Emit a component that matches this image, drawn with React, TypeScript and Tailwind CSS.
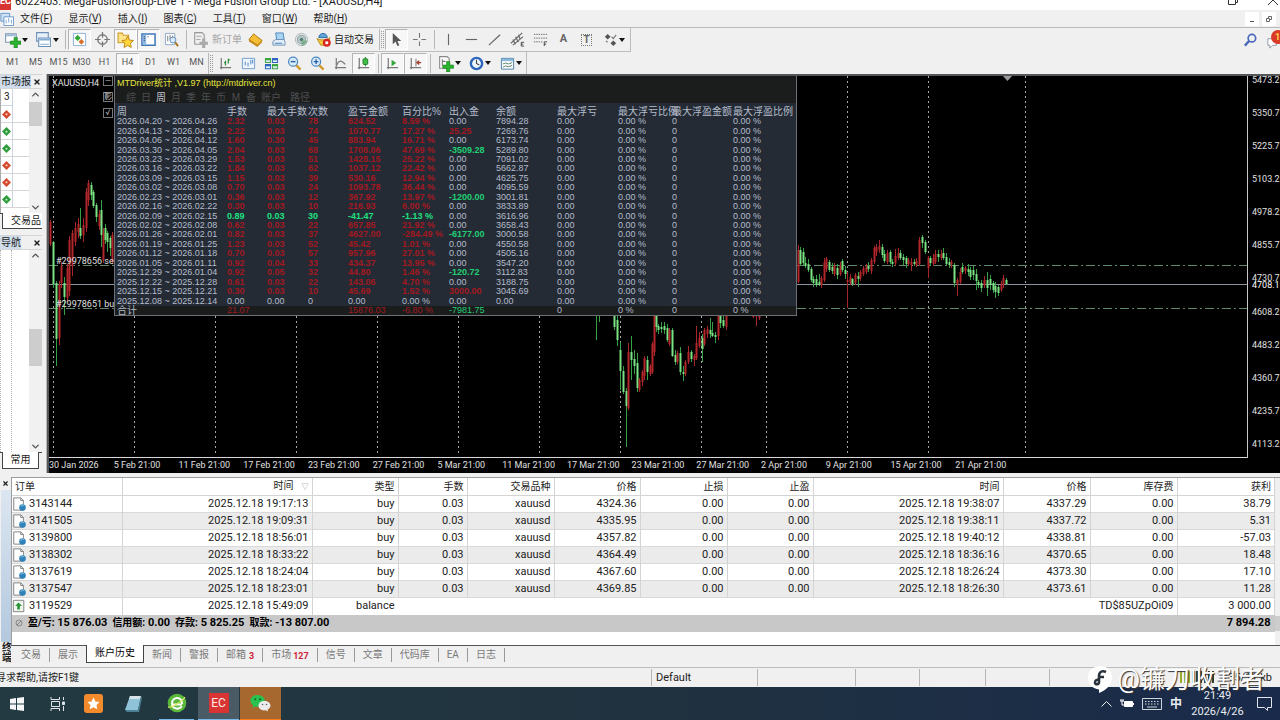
import { ReactNode } from "react";
import clsx from "clsx";
import { ChevronDown, ChevronUp, X } from "lucide-react";

/* ---------------- DATA ---------------- */

const MENUS = [
  ["文件", "F"],
  ["显示", "V"],
  ["插入", "I"],
  ["图表", "C"],
  ["工具", "T"],
  ["窗口", "W"],
  ["帮助", "H"],
];

const TIMEFRAMES = ["M1", "M5", "M15", "M30", "H1", "H4", "D1", "W1", "MN"];

const PRICES = [
  "5473.2", "5350.7", "5225.7", "5103.2", "4978.2", "4855.7",
  "4730.7", "4608.2", "4483.2", "4360.7", "4235.7", "4113.2",
];

const DATES = [
  "30 Jan 2026", "5 Feb 21:00", "11 Feb 21:00", "17 Feb 21:00", "23 Feb 21:00",
  "27 Feb 21:00", "5 Mar 21:00", "11 Mar 21:00", "17 Mar 21:00", "23 Mar 21:00",
  "27 Mar 21:00", "2 Apr 21:00", "9 Apr 21:00", "15 Apr 21:00", "21 Apr 21:00",
];

const STAT_HEADS = [
  "周", "手数", "最大手数", "次数", "盈亏金额", "百分比%", "出入金", "余额",
  "最大浮亏", "最大浮亏比例", "最大浮盈金额", "最大浮盈比例",
];

// week, lots, max lots, trades, profit, percent, deposit, balance
const STATS = [
  ["2026.04.20 ~ 2026.04.26", "2.32", "0.03", "78", "624.52", "8.59 %", "0.00", "7894.28"],
  ["2026.04.13 ~ 2026.04.19", "2.22", "0.03", "74", "1070.77", "17.27 %", "25.25", "7269.76"],
  ["2026.04.06 ~ 2026.04.12", "1.60", "0.30", "45", "883.94", "16.71 %", "0.00", "6173.74"],
  ["2026.03.30 ~ 2026.04.05", "2.04", "0.03", "68", "1708.06", "47.69 %", "-3509.28", "5289.80"],
  ["2026.03.23 ~ 2026.03.29", "1.53", "0.03", "51", "1428.15", "25.22 %", "0.00", "7091.02"],
  ["2026.03.16 ~ 2026.03.22", "1.84", "0.03", "62", "1037.12", "22.42 %", "0.00", "5662.87"],
  ["2026.03.09 ~ 2026.03.15", "1.15", "0.03", "39", "530.16", "12.94 %", "0.00", "4625.75"],
  ["2026.03.02 ~ 2026.03.08", "0.70", "0.03", "24", "1093.78", "36.44 %", "0.00", "4095.59"],
  ["2026.02.23 ~ 2026.03.01", "0.36", "0.03", "12", "367.92", "13.97 %", "-1200.00", "3001.81"],
  ["2026.02.16 ~ 2026.02.22", "0.30", "0.03", "10", "216.93", "6.00 %", "0.00", "3833.89"],
  ["2026.02.09 ~ 2026.02.15", "0.89", "0.03", "30", "-41.47", "-1.13 %", "0.00", "3616.96"],
  ["2026.02.02 ~ 2026.02.08", "0.62", "0.03", "22", "657.85", "21.92 %", "0.00", "3658.43"],
  ["2026.01.26 ~ 2026.02.01", "0.82", "0.03", "37", "4627.00", "-284.49 %", "-6177.00", "3000.58"],
  ["2026.01.19 ~ 2026.01.25", "1.23", "0.03", "52", "45.42", "1.01 %", "0.00", "4550.58"],
  ["2026.01.12 ~ 2026.01.18", "0.70", "0.03", "57", "957.96", "27.01 %", "0.00", "4505.16"],
  ["2026.01.05 ~ 2026.01.11", "0.92", "0.04", "33", "434.37", "13.95 %", "0.00", "3547.20"],
  ["2025.12.29 ~ 2026.01.04", "0.92", "0.05", "32", "44.80", "1.46 %", "-120.72", "3112.83"],
  ["2025.12.22 ~ 2025.12.28", "0.61", "0.03", "22", "143.06", "4.70 %", "0.00", "3188.75"],
  ["2025.12.15 ~ 2025.12.21", "0.30", "0.03", "10", "45.69", "1.52 %", "3000.00", "3045.69"],
  ["2025.12.08 ~ 2025.12.14", "0.00", "0.00", "0", "0.00", "0.00 %", "0.00", "0.00"],
];

const ORDERS = [
  ["3143144", "2025.12.18 19:17:13", "4324.36", "2025.12.18 19:38:07", "4337.29", "38.79"],
  ["3141505", "2025.12.18 19:09:31", "4335.95", "2025.12.18 19:38:11", "4337.72", "5.31"],
  ["3139800", "2025.12.18 18:56:01", "4357.82", "2025.12.18 19:40:12", "4338.81", "-57.03"],
  ["3138302", "2025.12.18 18:33:22", "4364.49", "2025.12.18 18:36:16", "4370.65", "18.48"],
  ["3137619", "2025.12.18 18:24:04", "4367.60", "2025.12.18 18:26:24", "4373.30", "17.10"],
  ["3137547", "2025.12.18 18:23:01", "4369.85", "2025.12.18 18:26:30", "4373.61", "11.28"],
];

const SUMMARY = [
  ["盈/亏:", "15 876.03"],
  ["信用额:", "0.00"],
  ["存款:", "5 825.25"],
  ["取款:", "-13 807.00"],
];

// x, high, low, body top, body bottom (1 = up bar)
const CANDLES = [
  [1, 144, 170, 146, 168, 1], [4, 165, 212, 166, 208, 0], [7, 205, 290, 207, 263, 0],
  [10, 205, 269, 209, 262, 1], [12, 186, 212, 190, 207, 1], [15, 201, 239, 207, 221, 0],
  [18, 188, 226, 192, 222, 1], [20, 160, 220, 164, 215, 1], [23, 154, 200, 157, 190, 1],
  [26, 146, 170, 152, 166, 1], [29, 142, 162, 148, 156, 1], [31, 132, 163, 152, 160, 0],
  [34, 142, 166, 149, 159, 1], [37, 112, 156, 116, 152, 1], [39, 104, 130, 107, 124, 1],
  [42, 106, 124, 109, 119, 0], [44, 114, 132, 116, 130, 0], [47, 127, 146, 129, 141, 0],
  [50, 134, 154, 138, 150, 1], [52, 124, 171, 134, 159, 0], [54, 152, 187, 157, 184, 1],
  [56, 148, 168, 152, 164, 0], [58, 155, 176, 157, 166, 0], [61, 160, 180, 162, 172, 0],
  [63, 156, 188, 159, 186, 1],
  [547, 230, 264, 238, 239, 0], [550, 230, 246, 238, 239, 0], [565, 228, 254, 232, 251, 0],
  [568, 238, 270, 244, 264, 0], [571, 266, 314, 274, 295, 0], [574, 290, 318, 295, 316, 0],
  [577, 312, 371, 315, 330, 0], [579, 267, 334, 276, 332, 1], [582, 260, 304, 276, 284, 0],
  [585, 274, 298, 283, 290, 0], [588, 277, 316, 287, 312, 0], [590, 302, 316, 304, 314, 1],
  [593, 294, 310, 296, 306, 1], [595, 280, 304, 282, 300, 1], [598, 280, 304, 284, 296, 0],
  [601, 288, 300, 290, 298, 1], [603, 266, 298, 268, 296, 1], [605, 236, 280, 238, 276, 1],
  [607, 234, 256, 236, 251, 0], [609, 248, 258, 250, 254, 0], [612, 246, 257, 251, 253, 0],
  [615, 246, 258, 250, 254, 0], [618, 248, 266, 252, 264, 0], [620, 252, 270, 254, 268, 1],
  [623, 252, 281, 254, 280, 0], [626, 274, 289, 279, 286, 0], [628, 275, 288, 277, 286, 1],
  [631, 271, 299, 277, 296, 0], [634, 290, 305, 296, 298, 0], [636, 284, 300, 286, 298, 1],
  [639, 270, 288, 276, 286, 1], [642, 274, 286, 276, 283, 0], [645, 278, 290, 280, 284, 1],
  [647, 250, 284, 267, 282, 1], [650, 256, 272, 262, 270, 1], [653, 258, 286, 262, 273, 0],
  [655, 252, 270, 254, 268, 1], [658, 250, 262, 253, 258, 1], [661, 242, 262, 254, 258, 0],
  [663, 246, 261, 257, 260, 0], [666, 256, 267, 259, 261, 0], [669, 236, 264, 238, 260, 1],
  [671, 234, 252, 236, 247, 0], [674, 240, 252, 244, 250, 0], [677, 232, 254, 234, 251, 1],
  [704, 236, 242, 238, 241, 1], [707, 236, 250, 238, 240, 1], [710, 236, 244, 238, 242, 1],
  [749, 169, 207, 174, 206, 1], [751, 171, 190, 174, 188, 0], [754, 172, 190, 176, 187, 0],
  [756, 181, 192, 187, 190, 0], [759, 183, 196, 188, 194, 0], [762, 191, 206, 193, 204, 0],
  [764, 200, 211, 203, 207, 0], [767, 199, 211, 203, 209, 0], [770, 198, 210, 206, 209, 0],
  [772, 200, 212, 202, 209, 1], [775, 182, 206, 186, 204, 1], [777, 181, 196, 183, 193, 1],
  [780, 184, 196, 186, 194, 0], [783, 187, 198, 191, 195, 0], [785, 187, 200, 190, 198, 1],
  [788, 188, 203, 192, 199, 0], [791, 186, 200, 190, 198, 1], [793, 183, 196, 185, 194, 0],
  [796, 190, 203, 194, 198, 0], [798, 196, 232, 204, 206, 1], [801, 198, 209, 201, 207, 1],
  [803, 202, 210, 203, 208, 0], [806, 197, 209, 199, 207, 1], [809, 196, 211, 200, 203, 0],
  [811, 194, 205, 196, 202, 1], [814, 190, 200, 192, 198, 1], [817, 188, 198, 190, 196, 1],
  [819, 186, 196, 190, 193, 0], [822, 182, 198, 184, 195, 1], [825, 170, 188, 172, 186, 1],
  [827, 168, 180, 171, 176, 1], [830, 164, 177, 170, 174, 1], [833, 168, 182, 171, 179, 0],
  [835, 174, 187, 178, 185, 0], [838, 174, 188, 177, 186, 1], [841, 174, 188, 176, 186, 0],
  [843, 183, 191, 186, 188, 0], [846, 173, 190, 180, 187, 1], [849, 172, 184, 177, 182, 1],
  [851, 174, 184, 177, 182, 0], [854, 178, 190, 181, 184, 0], [857, 180, 192, 182, 188, 0],
  [859, 182, 190, 184, 188, 1], [862, 182, 195, 186, 189, 1], [865, 183, 190, 186, 188, 0],
  [867, 182, 191, 185, 189, 1], [870, 161, 190, 164, 188, 1], [873, 159, 172, 161, 167, 0],
  [876, 164, 178, 166, 176, 0], [879, 180, 202, 182, 192, 1], [881, 180, 190, 182, 187, 0],
  [884, 178, 190, 182, 188, 1], [886, 174, 188, 178, 186, 1], [889, 174, 186, 178, 181, 0],
  [892, 174, 184, 178, 182, 1], [894, 172, 184, 177, 182, 0], [897, 177, 190, 181, 188, 0],
  [900, 182, 192, 186, 189, 0], [902, 184, 192, 186, 188, 1], [905, 187, 211, 189, 207, 0],
  [908, 202, 220, 204, 208, 1], [911, 192, 208, 196, 206, 1], [913, 187, 198, 191, 196, 0],
  [916, 190, 198, 192, 195, 1], [919, 188, 200, 193, 196, 0], [921, 191, 204, 194, 201, 0],
  [924, 190, 204, 194, 199, 0], [927, 193, 214, 198, 205, 0], [929, 204, 212, 206, 209, 0],
  [932, 204, 216, 207, 212, 0], [935, 200, 212, 204, 209, 1], [938, 196, 220, 204, 212, 0],
  [941, 199, 214, 203, 209, 0], [944, 205, 217, 207, 214, 0], [946, 206, 222, 210, 216, 0],
  [949, 209, 220, 211, 217, 0], [952, 205, 216, 208, 214, 1], [954, 199, 212, 202, 208, 1],
  [957, 202, 209, 204, 208, 0],
];

const SESSIONS = [4, 85, 166, 247, 328, 409, 490, 571, 652, 717, 798, 879, 976];

/* ---------------- SMALL PARTS ---------------- */

function Ico({ children, size = 15 }: { children: ReactNode; size?: number }) {
  return (
    <svg width={size} height={size} viewBox="0 0 16 16" fill="none" aria-hidden="true" className="shrink-0">
      {children}
    </svg>
  );
}

function Tool({ children, label, on, drop }: { children: ReactNode; label: string; on?: boolean; drop?: boolean }) {
  return (
    <button
      type="button"
      aria-label={label}
      className={clsx(
        "flex h-[21px] shrink-0 items-center justify-center",
        drop ? "w-[31px] gap-px" : "w-[23px]",
        on && "border border-r-white border-b-white border-t-[#b4b4b4] border-l-[#b4b4b4] bg-[#f7f7f7]"
      )}
    >
      {children}
      {drop && <Drop />}
    </button>
  );
}

function Drop() {
  return (
    <svg width="6" height="4" viewBox="0 0 6 4" aria-hidden="true" className="shrink-0">
      <path d="M0 0h6L3 4z" fill="#111" />
    </svg>
  );
}

const Sep = () => (
  <span className="flex w-[6px] shrink-0 justify-center">
    <span className="h-[19px] w-px bg-[#b8b8b8]" />
  </span>
);

const Grip = () => (
  <span className="flex h-[21px] w-[6px] shrink-0 items-center border-l border-[#b8b8b8] pl-px">
    <span className="h-[17px] w-[3px] border-x border-dotted border-[#999]" />
  </span>
);

const Axes = () => <path d="M3.500 2v12M2 12.500h12" stroke="#7a7a7a" strokeWidth="1.300" />;

/* ---------------- TOOLBARS ---------------- */

function MainToolbar() {
  return (
    <div className="flex h-6 items-center">
      <div className="flex h-6 items-center border-r border-b border-[#bdbdbd] pr-px">
        <Tool label="新图表" drop>
          <Ico size={17}>
            <path d="M1.500 2.500h10v8h-10z" fill="#fff" stroke="#7c98b3" />
            <path d="M2 3h9v2H2z" fill="#9db9d3" />
            <path d="M9.500 6v3.500H6v3h3.500V16h3v-3.500H16v-3h-3.500V6z" fill="#2bb52f" stroke="#138017" strokeWidth=".6" />
          </Ico>
        </Tool>
        <Tool label="配置文件" drop>
          <Ico size={17}>
            <path d="M1.500 1.500h11v8h-11z" fill="#e8f1fa" stroke="#6d8fb5" />
            <path d="M3.500 6.500h11v8h-11z" fill="#fff" stroke="#6d8fb5" />
            <path d="M4 7h10v2H4zM5 12h8v1H5z" fill="#84abd4" />
          </Ico>
        </Tool>
        <Sep />
        <Tool label="市场报价" on>
          <Ico>
            <path d="M1.500 1.500h13v13h-13z" fill="#fff" stroke="#86aed6" />
            <path d="M6 3l3.300 3.300L6 9.600 2.700 6.300z" fill="#35a838" />
            <path d="M10 7.500l3 3-3 3-3-3z" fill="#d8702c" />
          </Ico>
        </Tool>
        <Tool label="数据窗口">
          <Ico>
            <circle cx="8" cy="8" r="5" stroke="#777" strokeWidth="1.500" />
            <path d="M8 0v6M8 10v6M0 8h6M10 8h6" stroke="#777" strokeWidth="1.300" />
          </Ico>
        </Tool>
        <Tool label="导航" on>
          <Ico size={17}>
            <path d="M1 2h4l1 2h5v7H1z" fill="#ffe48a" stroke="#cf9a28" />
            <path d="M10 5l1.700 3.500 3.800.5-2.800 2.600.7 3.900-3.400-1.900-3.400 1.900.7-3.900L4.500 9l3.800-.5z" fill="#ffd43a" stroke="#bd8717" strokeWidth=".9" />
          </Ico>
        </Tool>
        <Tool label="终端" on>
          <Ico>
            <path d="M1 2h14v12H1z" fill="#fff" stroke="#3f78b9" strokeWidth="1.600" />
            <path d="M2 3h3.500v10H2z" fill="#8db9e8" />
            <path d="M3 5h1M3 7h1M3 9h1M7 5h1" stroke="#333" />
          </Ico>
        </Tool>
        <Tool label="策略测试">
          <Ico>
            <path d="M1.500 1.500h10v12h-10z" fill="#fff" stroke="#8aa6c2" />
            <path d="M4 4v6M6.500 3v5M9 4v4" stroke="#777" />
            <circle cx="9.500" cy="8.500" r="3.200" fill="#d5e9fa" fillOpacity=".8" stroke="#5f8fbe" />
            <path d="M12 11l3 4" stroke="#a97424" strokeWidth="2" />
          </Ico>
        </Tool>
        <Sep />
        <button type="button" disabled className="flex h-[21px] w-[55px] items-center gap-[3px] pl-[3px] text-[10px] whitespace-nowrap text-[#a5a5a5]">
          <Ico size={17}>
            <path d="M2.500 1.500h7l2 2v9h-9z" fill="#eee" stroke="#999" />
            <path d="M4 5h5M4 8h4" stroke="#aaa" />
            <path d="M9.500 7v3H7v3h2.500v3h3v-3H15v-3h-2.500V7z" fill="#aaa" />
          </Ico>
          新订单
        </button>
        <Tool label="MetaEditor">
          <Ico>
            <path d="M6 2l9 7-5 5-9-6z" fill="#f3bd35" stroke="#ad750f" />
            <path d="M1 8v2l9 6 5-5V9l-5 5z" fill="#c98a17" />
          </Ico>
        </Tool>
        <Tool label="VPS">
          <Ico>
            <path d="M5 1h8l1 7H6z" fill="#a8d3f3" stroke="#4a86bd" />
            <path d="M2 10l3-2h9l1 3v3H2z" fill="#e2edf6" stroke="#6e93b5" />
            <path d="M4 12h8" stroke="#3f7db8" />
          </Ico>
        </Tool>
        <Tool label="信号">
          <Ico>
            <circle cx="8" cy="8" r="6.500" fill="#e3e8e8" stroke="#a9b8b5" />
            <circle cx="8" cy="8" r="4.300" fill="#b9c6ca" stroke="#8b9ca0" />
            <circle cx="8" cy="8" r="1.800" fill="#4e7f71" />
            <path d="M8 9v6c4-.5 6-3 6-6" fill="#69a57a" fillOpacity=".7" />
          </Ico>
        </Tool>
        <button type="button" className="flex h-[21px] w-[66px] items-center gap-[3px] pl-[3px] text-[10px] whitespace-nowrap">
          <Ico>
            <path d="M3 6c0-6 9-6 9 0z" fill="#5ea3d9" stroke="#31699c" />
            <path d="M1 7c3 2 10 2 14-1l-4 8H5z" fill="#f3ca3d" stroke="#b98b19" />
            <circle cx="11.500" cy="11.500" r="4.200" fill="#d9261c" />
            <path d="M10 10h3v3h-3z" fill="#fff" />
          </Ico>
          自动交易
        </button>
        <Grip />
        <Tool label="光标" on>
          <Ico>
            <path d="M4 1v12l3-2.800 2 4.800 2-1-2-4.500h4z" fill="#555" />
          </Ico>
        </Tool>
        <Tool label="十字准线">
          <Ico>
            <path d="M8 1v5M8 10v5M1 8h5M10 8h5" stroke="#777" strokeWidth="1.200" />
          </Ico>
        </Tool>
        <Sep />
        <Tool label="垂直线"><Ico><path d="M8 2v12" stroke="#666" strokeWidth="1.200" /></Ico></Tool>
        <Tool label="水平线"><Ico><path d="M2 8h12" stroke="#666" strokeWidth="1.200" /></Ico></Tool>
        <Tool label="趋势线"><Ico><path d="M2 14L14 3" stroke="#666" strokeWidth="1.300" /></Ico></Tool>
        <Tool label="等距通道">
          <Ico>
            <path d="M1 12L13 1M3 14L14 5M3 8l3 5M6 5l3 6M9 3l2 5" stroke="#666" strokeWidth="1.200" />
            <path d="M15 11h-3v4h3M12 13h2" stroke="#444" />
          </Ico>
        </Tool>
        <Tool label="斐波纳契">
          <Ico>
            <path d="M1 2.500h14M1 6.500h14M1 10.500h9" stroke="#666" strokeDasharray="1.500 1" />
            <path d="M15 10.500h-3V15M12 13h2" stroke="#444" />
          </Ico>
        </Tool>
        <Tool label="文字"><span className="text-[11px] font-bold text-[#666]">A</span></Tool>
        <Tool label="文字标签">
          <span className="flex h-3 w-[11px] items-center justify-center border border-dotted border-[#777] text-[10px] font-bold text-[#666]">T</span>
        </Tool>
        <Tool label="箭头" drop>
          <Ico>
            <path d="M5 2l3 3-3 3-3-3z" fill="#555" />
            <path d="M11 9l3 3-3 3-3-3z" fill="#555" />
            <path d="M3 9.500l2 1.500M9 5l2 2 3-4" stroke="#777" strokeWidth="1.200" />
          </Ico>
        </Tool>
      </div>
      <div className="ml-auto flex items-center gap-2 overflow-hidden">
        <button type="button" aria-label="搜索" className="flex">
          <Ico>
            <circle cx="9.500" cy="5.500" r="4" stroke="#4a68ba" strokeWidth="1.800" />
            <path d="M6.500 8.500L2 13.500" stroke="#4a68ba" strokeWidth="2.600" />
          </Ico>
        </button>
        <button type="button" aria-label="通知" className="relative flex h-5 w-[14px] items-end">
          <Ico>
            <path d="M2 4h9v7H7l-3 3v-3H2z" fill="#fff" stroke="#9097a5" />
          </Ico>
          <span className="absolute top-0 left-[5px] h-[14px] w-[14px] rounded-full bg-[#d93b28] pl-1 text-left text-[9px] leading-[14px] font-bold text-[#ffd34d]">1</span>
        </button>
      </div>
    </div>
  );
}

function ChartToolbar() {
  return (
    <div className="flex h-[22px] items-center">
      <div className="flex h-[22px] items-center border-r border-[#bdbdbd] pl-px text-[9px] text-[#555]">
        {TIMEFRAMES.map((tf) => (
          <button
            key={tf}
            type="button"
            className={clsx(
              "h-[21px] w-[23px] text-center",
              tf === "H4" && "border border-t-[#b4b4b4] border-r-white border-b-white border-l-[#b4b4b4] bg-[#f7f7f7]"
            )}
          >
            {tf}
          </button>
        ))}
        <Grip />
        <Tool label="柱状图"><Ico><Axes /><path d="M8 10V5M11 8V3M8 7h-1.500M11 4h2" stroke="#2d8a3a" strokeWidth="1.300" /></Ico></Tool>
        <Tool label="指标列表">
          <Ico>
            <path d="M1.500 2.500h13v11h-13z" fill="#eef5fd" stroke="#6d9bd0" />
            <path d="M4.500 10V6M7.500 11V7M10.500 9V4M12.500 8V4" stroke="#4c83c0" />
          </Ico>
        </Tool>
        <Tool label="平铺窗口">
          <Ico>
            <path d="M1 2h6.500v5.500H1zM8.500 8.500H15V14H8.500z" fill="#3ea43f" />
            <path d="M8.500 2H15v5.500H8.500zM1 8.500h6.500V14H1z" fill="#2d65bd" />
            <path d="M2 4.500h4.500v2H2zM9.500 4.500H14v2H9.500zM2 11h4.500v2H2zM9.500 11H14v2H9.500z" fill="#d7ecf5" />
          </Ico>
        </Tool>
        <Tool label="缩小">
          <Ico>
            <path d="M9.500 9.500l5 5" stroke="#cf9c2e" strokeWidth="2.600" />
            <circle cx="6.500" cy="6" r="4.800" fill="#d6eafa" stroke="#4b87c4" strokeWidth="1.300" />
            <path d="M4 6h5" stroke="#2e63a8" strokeWidth="1.500" />
          </Ico>
        </Tool>
        <Tool label="放大">
          <Ico>
            <path d="M9.500 9.500l5 5" stroke="#cf9c2e" strokeWidth="2.600" />
            <circle cx="6.500" cy="6" r="4.800" fill="#d6eafa" stroke="#4b87c4" strokeWidth="1.300" />
            <path d="M4 6h5M6.500 3.500v5" stroke="#2e63a8" strokeWidth="1.500" />
          </Ico>
        </Tool>
        <Tool label="折线图"><Ico><Axes /><path d="M4 10c2-6 5-6 9-1" stroke="#777" strokeWidth="1.300" /></Ico></Tool>
        <Tool label="蜡烛图" on><Ico><Axes /><path d="M10 1v10" stroke="#187d22" /><rect x="7.500" y="3" width="5" height="6" rx="1" fill="#42bd4b" stroke="#187d22" /></Ico></Tool>
        <Sep />
        <Tool label="自动滚动" on><Ico><Axes /><path d="M7 4l5 3.500L7 11z" fill="#35a53d" /></Ico></Tool>
        <Tool label="图表平移" on><Ico><Axes /><path d="M8.500 3v8" stroke="#666" /><path d="M14 7H9.500M12 5L9.500 7 12 9" stroke="#a63e2c" strokeWidth="1.400" /></Ico></Tool>
        <Sep />
        <Tool label="指标" drop>
          <Ico size={17}>
            <path d="M2.500 1.500h7l2 2v9h-9z" fill="#fff" stroke="#888" />
            <path d="M5 4v6M5 6h3" stroke="#777" />
            <path d="M9 6v3.500H5.500v3H9V16h3v-3.500h3.500v-3H12V6z" fill="#2bb52f" stroke="#138017" strokeWidth=".6" />
          </Ico>
        </Tool>
        <Tool label="周期" drop>
          <Ico>
            <circle cx="8" cy="8" r="6" fill="#f2f8ff" stroke="#2c66bb" strokeWidth="2.600" />
            <path d="M8 4v4l3 1.500" stroke="#444" strokeWidth="1.200" />
          </Ico>
        </Tool>
        <Tool label="模板" drop>
          <Ico>
            <path d="M1.500 2.500h13v11.500h-13z" fill="#fff" stroke="#4a82ad" />
            <path d="M2 3h12v2.500H2z" fill="#8ab8dd" />
            <path d="M3 8.500l3-1 3 1 4-1.500M3 12l3-1.500 3 1 4-1.500" stroke="#55806a" />
          </Ico>
        </Tool>
      </div>
    </div>
  );
}

/* ---------------- LEFT DOCKS ---------------- */

function DockHeader({ title }: { title: string }) {
  return (
    <header className="flex h-[15px] items-center justify-between border-y border-[#d5d5d5]">
      <h2 className="h-[13px] bg-[#cfdcec] pl-px text-[10px] leading-[13px] whitespace-nowrap">{title}</h2>
      <button type="button" aria-label="关闭" className="flex w-[10px] justify-center">
        <X size={8} strokeWidth={4} />
      </button>
    </header>
  );
}

function Scroll({ thumb }: { thumb: string }) {
  return (
    <div className="flex w-[13px] shrink-0 flex-col items-center justify-between bg-[#f1f1f1] text-[#555]">
      <ChevronUp size={11} strokeWidth={3} />
      <div className={clsx("w-[13px] bg-[#cdcdcd]", thumb)} />
      <div className="flex-1" />
      <ChevronDown size={11} strokeWidth={3} />
    </div>
  );
}

function LeftDocks() {
  return (
    <aside className="flex w-[47px] shrink-0 flex-col border-r border-[#b9b9b9] pr-1">
      <DockHeader title="市场报" />
      <div className="flex h-[124px] overflow-hidden bg-white">
        <ul className="flex-1 border-l border-[#aaa] text-[10px] leading-4">
          <li className="h-[17px] w-3 border-r border-b border-[#ccd5df] pl-[3px]">3</li>
          {["r", "g", "g", "r", "r", "g"].map((c, i) => (
            <li key={i} className="flex h-[17px] border-b border-[#d5d5d5]">
              <span className="flex w-3 items-center justify-center border-r border-[#ccd5df]">
                <svg width="9" height="9" viewBox="0 0 10 10" aria-hidden="true">
                  <path d="M5 0l5 5-5 5-5-5z" fill={c === "r" ? "#d5492d" : "#2e9c3a"} />
                  <path d={c === "r" ? "M4 4h2v1L5 6 4 5z" : "M4 6h2V5L5 4 4 5z"} fill="#fff" fillOpacity=".8" />
                </svg>
              </span>
            </li>
          ))}
        </ul>
        <Scroll thumb="mt-[2px] h-6" />
      </div>
      <div className="mb-[6px] flex h-4">
        <span className="w-[2px] border-t border-[#444]" />
        <button type="button" className="flex-1 overflow-hidden border-b border-l border-[#444] bg-white pl-2 text-left text-[10px] leading-[15px] whitespace-nowrap">
          交易品
        </button>
      </div>
      <DockHeader title="导航" />
      <div className="flex flex-1 bg-white">
        <div className="w-3 border-r border-l border-dotted border-[#b5b5b5]" />
        <div className="flex-1" />
        <Scroll thumb="mt-[68px] h-[37px]" />
      </div>
      <div className="mb-1 flex h-[17px]">
        <span className="w-[2px] border-t border-[#444]" />
        <button type="button" className="w-[37px] border-r border-b border-l border-[#444] bg-white text-center text-[10px] leading-4">
          常用
        </button>
        <span className="flex-1 border-t border-[#444]" />
      </div>
    </aside>
  );
}

/* ---------------- CHART ---------------- */

function tone(col: number, cell: string, loss: boolean, empty: boolean) {
  if (col === 6) {
    if (cell === "0.00") return "";
    return cell.startsWith("-") ? "font-bold text-[#20cf74]" : "font-bold text-[#a31820]";
  }
  if (col === 0 || col > 5 || empty) return "";
  return loss ? "font-bold text-[#20e080]" : "font-bold text-[#a31820]";
}

function StatsPanel() {
  return (
    <section className="absolute top-0 left-[65px] w-[683px] overflow-hidden border border-t-0 border-[#6c7178] bg-[#242b35] font-['Liberation_Sans','Noto_Sans_CJK_SC',sans-serif] text-[9px] text-[#b4bccb]">
      <div className="h-[27px] bg-[#1b1c1c] pl-[2px]">
        <h3 className="h-[14px] text-[9px] leading-[15px] text-[#e4e43c]">MTDriver统计 ,V1.97 (http://mtdriver.cn)</h3>
        <nav className="flex gap-[5px] pl-[9px] text-[10px] leading-[15px] text-[#4d4f51]">
          {["综", "日", "周", "月", "季", "年", "币", "M", "备", "账户", "路径"].map((t) => (
            <button key={t} type="button" className={clsx("min-w-[10px]", t === "周" && "text-[#c4c8d4]", t === "路径" && "ml-1")}>
              {t}
            </button>
          ))}
        </nav>
      </div>
      <table className="h-[212px] w-full table-fixed text-left">
        <colgroup>
          <col className="w-[110px]" />
          <col className="w-[40px]" />
          <col className="w-[41px]" />
          <col className="w-[40px]" />
          <col className="w-[54px]" />
          <col className="w-[47px]" />
          <col className="w-[47px]" />
          <col className="w-[61px]" />
          <col className="w-[61px]" />
          <col className="w-[54px]" />
          <col className="w-[61px]" />
          <col />
        </colgroup>
        <thead>
          <tr className="h-[14px]">
            {STAT_HEADS.map((h) => (
              <th key={h} className="p-0 pt-[3px] pl-[2px] text-[10px] leading-[11px] font-normal whitespace-nowrap">{h}</th>
            ))}
          </tr>
        </thead>
        <tbody>
          {STATS.map((row) => (
            <tr key={row[0]}>
              {[...row, "0.00", "0.00 %", "0", "0.00 %"].map((cell, i) => (
                <td
                  key={i}
                  className={clsx("p-0 pl-[2px] leading-[9px] whitespace-nowrap", tone(i, cell, row[4].startsWith("-"), row[3] === "0"))}
                >
                  {cell}
                </td>
              ))}
            </tr>
          ))}
        </tbody>
        <tfoot>
          <tr className="bg-[#1b1c1c]">
            <th className="p-0 pl-[2px] text-[10px] leading-[9px] font-normal">合计</th>
            <td className="p-0 pl-[2px] leading-[9px] text-[#a31820]">21.07</td>
            <td />
            <td />
            <td className="p-0 pl-[2px] leading-[9px] text-[#a31820]">15876.03</td>
            <td className="p-0 pl-[2px] leading-[9px] text-[#a31820]">-6.80 %</td>
            <td className="p-0 pl-[2px] leading-[9px] text-[#20cf74]">-7981.75</td>
            <td />
            <td className="p-0 pl-[2px] leading-[9px]">0</td>
            <td className="p-0 pl-[2px] leading-[9px]">0 %</td>
            <td className="p-0 pl-[2px] leading-[9px]">0</td>
            <td className="p-0 pl-[2px] leading-[9px]">0 %</td>
          </tr>
        </tfoot>
      </table>
    </section>
  );
}

function Plot() {
  return (
    <svg className="block h-[382px] w-full" aria-hidden="true">
      {SESSIONS.map((x) => (
        <line key={x} x1={x + 0.5} x2={x + 0.5} y1="0" y2="380" stroke="#a8a8a8" strokeDasharray="2 3" />
      ))}
      <line x1="0" x2="100%" y1="189.500" y2="189.500" stroke="#5e8a6a" strokeDasharray="9 3 2 3" />
      <line x1="0" x2="100%" y1="232.500" y2="232.500" stroke="#5e8a6a" strokeDasharray="9 3 2 3" />
      <line x1="0" x2="100%" y1="208.500" y2="208.500" stroke="#8d949b" />
      {CANDLES.map(([x, high, low, top, bottom, up]) => (
        <g key={x} stroke={up ? "#a8262a" : "#35a045"}>
          <line x1={x + 0.5} x2={x + 0.5} y1={high} y2={low} />
          <line x1={x + 0.5} x2={x + 0.5} y1={top} y2={bottom} strokeWidth="2" stroke={up ? "#b3262b" : "#7be383"} />
        </g>
      ))}
      <path d="M954 0h9l-4.500 5z" fill="#9a9a9a" />
      <line x1="0" x2="100%" y1="381.500" y2="381.500" stroke="#d8d8d8" />
    </svg>
  );
}

function Chart() {
  return (
    <main className="flex min-w-0 flex-1 border-t-2 border-l-2 border-[#55565a] bg-black text-[9px] leading-[9px] text-[#e0e0e0]">
      <div className="relative min-w-0 flex-1 overflow-hidden">
        <div className="border-r border-[#c8c8c8]">
          <Plot />
        </div>
        <ol className="flex w-[971px] pt-[3px] pb-[3px]">
          {DATES.map((d) => (
            <li key={d} className="min-w-0 flex-1 whitespace-nowrap">{d}</li>
          ))}
        </ol>
        <h2 className="absolute top-[3px] left-[3px]">XAUUSD,H4</h2>
        <span className="absolute top-[181px] left-[7px] whitespace-nowrap">#29978656 sell</span>
        <span className="absolute top-[224px] left-[7px] whitespace-nowrap">#29978651 buy</span>
        <div className="absolute top-0 left-[54px] flex flex-col gap-[6px]">
          {["—", "影", "√"].map((t) => (
            <button key={t} type="button" className="h-[10px] w-[10px] border border-[#777] bg-black text-center text-[8px] leading-[8px] text-[#bbb]">
              {t}
            </button>
          ))}
        </div>
        <StatsPanel />
      </div>
      <ol className="relative flex h-[397px] w-8 shrink-0 flex-col overflow-hidden pl-1">
        {PRICES.map((p) => (
          <li key={p} className="min-h-0 flex-1">{p}</li>
        ))}
        <li className="absolute top-[205px] left-0 w-full pl-1 text-white">4708.1</li>
      </ol>
    </main>
  );
}

/* ---------------- TERMINAL ---------------- */

const CELL = "border-r border-[#d4d4d4] px-[3px] py-0";
const ID_CELL = "border-r border-[#d4d4d4] p-0";

function Terminal() {
  const heads = ["类型", "手数", "交易品种", "价格", "止损", "止盈", "时间", "价格", "库存费", "获利"];
  const tabs = ["交易", "展示", "账户历史", "新闻", "警报", "邮箱", "市场", "信号", "文章", "代码库", "EA", "日志"];

  return (
    <section className="flex pt-1">
      <div className="flex w-[11px] shrink-0 flex-col items-center overflow-hidden">
        <button type="button" aria-label="关闭" className="flex h-[13px] items-center">
          <X size={7} strokeWidth={4} />
        </button>
        <div className="w-[10px] flex-1 bg-linear-to-b from-[#dce6f0] to-[#b4c8de]" />
        <h2 className="h-[22px] text-[10px] leading-[10px] font-bold [writing-mode:vertical-rl]">终端</h2>
      </div>
      <div className="min-w-0 flex-1">
        <div className="flex border-t border-l border-[#9c9c9c] bg-white">
          <div className="min-w-0 flex-1 pb-[13px]">
            <table className="w-full table-fixed text-right text-[11px] leading-4 text-[#222]">
              <colgroup>
                <col className="w-[110px]" />
                <col className="w-[190px]" />
                <col className="w-[86px]" />
                <col className="w-[69px]" />
                <col className="w-[87px]" />
                <col className="w-[86px]" />
                <col className="w-[87px]" />
                <col className="w-[86px]" />
                <col className="w-[190px]" />
                <col className="w-[87px]" />
                <col className="w-[87px]" />
                <col />
              </colgroup>
              <thead className="text-[10px]">
                <tr className="h-[17px] border-b border-[#d4d4d4]">
                  <th className={clsx(CELL, "text-left font-normal")}>订单</th>
                  <th className={clsx(CELL, "font-normal")}>
                    时间<span className="ml-2 text-[7px] text-[#777]">▽</span>
                  </th>
                  {heads.map((h, i) => (
                    <th key={i} className={clsx(CELL, "font-normal")}>{h}</th>
                  ))}
                </tr>
              </thead>
              <tbody>
                {ORDERS.map(([id, opened, price, closed, exit, profit], i) => (
                  <tr key={id} className={clsx("h-[17px] border-b border-[#d9d9d9]", i % 2 === 1 && "bg-[#ebebeb]")}>
                    <td className={ID_CELL}>
                      <span className="flex items-center gap-[3px]">
                        <Ico size={14}>
                          <path d="M2 1h8l3 3v11H2z" fill="#fff" stroke="#777" />
                          <path d="M10 1v3h3" stroke="#777" />
                          <circle cx="12" cy="12" r="3.800" fill="#2f83b8" />
                          <path d="M10 11c1-2 3-2 4-1" stroke="#9bd0ee" />
                        </Ico>
                        {id}
                      </span>
                    </td>
                    {[opened, "buy", "0.03", "xauusd", price, "0.00", "0.00", closed, exit, "0.00", profit].map((c, n) => (
                      <td key={n} className={CELL}>{c}</td>
                    ))}
                  </tr>
                ))}
                <tr className="h-[17px]">
                  <td className={ID_CELL}>
                    <span className="flex items-center gap-[3px]">
                      <Ico size={14}>
                        <path d="M1.500 1.500h12v13h-12z" fill="#eef6ee" stroke="#777" />
                        <path d="M7.500 4l4 4H9v4H6V8H3.500z" fill="#2b9436" />
                      </Ico>
                      3119529
                    </span>
                  </td>
                  <td className={CELL}>2025.12.18 15:49:09</td>
                  <td className={clsx(CELL, "border-r-transparent")}>balance</td>
                  <td colSpan={8} className={CELL}>TD$85UZpOi09</td>
                  <td className={CELL}>3 000.00</td>
                </tr>
              </tbody>
              <tfoot>
                <tr className="h-[17px] bg-[#c8c8c8] font-bold text-black">
                  <td colSpan={11} className="p-0 pl-[3px] text-left">
                    <span className="flex items-center gap-[5px] whitespace-nowrap">
                      <Ico size={8}>
                        <circle cx="8" cy="8" r="6" stroke="#888" strokeWidth="2" />
                        <path d="M4 12l8-8" stroke="#888" strokeWidth="2" />
                      </Ico>
                      {SUMMARY.map(([name, value]) => (
                        <span key={name}>
                          <span className="text-[10px]">{name}</span> {value}
                        </span>
                      ))}
                    </span>
                  </td>
                  <td className="p-0 pr-1">7 894.28</td>
                </tr>
              </tfoot>
            </table>
          </div>
          <div className="flex w-[5px] shrink-0 flex-col overflow-hidden bg-[#f0f0f0]">
            <div className="flex-1" />
            <div className="mb-[14px] h-[15px] bg-[#cdcdcd]" />
          </div>
        </div>
        <nav className="flex h-[19px] border-t border-[#555] text-[10px] text-[#7a7a7a]">
          {tabs.map((t) =>
            t === "账户历史" ? (
              <button key={t} type="button" className="-mt-px mr-2 h-[18px] border-x border-b border-[#444] bg-white px-2 leading-4 text-black">
                {t}
              </button>
            ) : (
              <button
                key={t}
                type="button"
                className={clsx("my-[2px] flex items-center leading-[13px]", t === "展示" ? "pr-2" : "mr-2 border-r border-[#999] pr-2", t === "交易" && "ml-[10px]")}
              >
                {t}
                {t === "邮箱" && <b className="mt-1 ml-[3px] text-[9px] text-[#cf2438]">3</b>}
                {t === "市场" && <b className="mt-1 ml-[2px] text-[9px] text-[#cf2438]">127</b>}
              </button>
            )
          )}
        </nav>
      </div>
    </section>
  );
}

function StatusBar() {
  return (
    <footer className="mt-[3px] flex h-5 items-center border-t border-[#bcbcbc] text-[10px] leading-[17px]">
      <p className="-ml-1 min-w-0 flex-1">寻求帮助,请按F1键</p>
      <p className="w-[106px] border-l border-[#b5b5b5] pl-1 text-[11px]">Default</p>
      <p className="h-[17px] w-[98px] border-l border-[#b5b5b5]" />
      <p className="h-[17px] w-[65px] border-x border-[#b5b5b5]" />
      <p className="h-[17px] w-[66px] border-r border-[#b5b5b5]" />
      <p className="h-[17px] w-[64px] border-r border-[#b5b5b5]" />
      <p className="flex w-[230px] items-center justify-end gap-2 pr-2 text-[11px]">
        <svg width="34" height="12" aria-hidden="true">
          <path d="M1 0v12M5 0v12M9 0v12M13 0v12" stroke="#9aae2a" strokeWidth="2" />
          <path d="M17 0v12M21 0v12M25 0v12M29 0v12M33 0v12" stroke="#35402a" strokeWidth="2" />
        </svg>
        <span className="whitespace-nowrap">735/11 kb</span>
      </p>
    </footer>
  );
}

/* ---------------- TASKBAR ---------------- */

function Taskbar() {
  return (
    <div className="flex h-[34px] items-stretch bg-linear-to-r from-[#233a42] via-[#20323f] to-[#1a2a4b] text-[#e8edf0]">
      <button type="button" aria-label="开始" className="flex w-[34px] items-center justify-center">
        <svg width="14" height="14" viewBox="0 0 14 14" fill="#f4f6f7">
          <path d="M0 2l6-.9v5.500H0zM7 1l7-1v6.600H7zM0 7.500h6V13l-6-.9zM7 7.500h7V14l-7-1z" />
        </svg>
      </button>
      <button type="button" aria-label="任务视图" className="flex w-[46px] items-center justify-center">
        <svg width="15" height="14" viewBox="0 0 15 14" fill="none" stroke="#dfe5e8">
          <path d="M1 0v2.500h8.500V0M1 14v-2.500h8.500V14M1.500 4.500h8v5h-8zM13.500 0v3M13.500 9v5" />
          <path d="M12.500 5h2v2.500h-2z" fill="#dfe5e8" />
        </svg>
      </button>
      <button type="button" aria-label="收藏" className="flex w-[26px] items-center justify-center">
        <svg width="19" height="19" viewBox="0 0 19 19">
          <rect width="19" height="19" rx="3" fill="#f38b2c" />
          <path d="M9.500 3.500l1.900 3.900 4.100.6-3 3 .8 4.300-3.800-2.100-3.800 2.100.8-4.300-3-3 4.100-.6z" fill="#fff" />
        </svg>
      </button>
      <button type="button" aria-label="记事本" className="flex w-[53px] items-center justify-center">
        <svg width="18" height="19" viewBox="0 0 18 19">
          <path d="M6 2h11l-3 14H1z" fill="#8fc4d8" />
          <path d="M6 2h11l-1 3H5z" fill="#d6e3e6" />
          <path d="M1 16h13l3-14 1 2-3 14H3z" fill="#4c8093" />
        </svg>
      </button>
      <button type="button" aria-label="浏览器" className="mr-1 flex w-[35px] flex-col items-center justify-end">
        <svg width="20" height="20" viewBox="0 0 20 20" fill="none" className="my-auto">
          <circle cx="10" cy="10" r="9.300" fill="#5ab73c" />
          <path d="M15 11.500H5.500M15 11C15.500 2.500 5 3.500 5 10.500c0 6 8 6.500 9.500 2.500" stroke="#fff" strokeWidth="2" />
          <path d="M1 14C4 15 15 9 18 4" stroke="#e2e86a" strokeWidth="1.200" />
        </svg>
        <span className="h-[2px] w-full bg-[#76b9ed]" />
      </button>
      <button type="button" className="flex w-[41px] flex-col items-center justify-end bg-[#4b5b66]">
        <span className="my-auto flex h-5 w-5 items-center justify-center bg-[#d93434] text-[12px] leading-5 text-[#ffe9e5]">EC</span>
        <span className="h-[2px] w-full bg-[#76b9ed]" />
      </button>
      <button type="button" aria-label="微信" className="ml-px flex w-[41px] flex-col items-center justify-end bg-[#a7682f]">
        <svg width="21" height="18" viewBox="0 0 21 18" className="my-auto">
          <path d="M7.500 1C3.500 1 .5 3.500.5 6.700c0 1.900 1 3.400 2.700 4.500L2.500 14l2.800-1.500c5 1 9.500-1.700 9.500-5.800C14.800 3.500 11.500 1 7.500 1z" fill="#29c251" />
          <path d="M14.500 7c-3.400 0-6 2-6 4.800 0 2.900 3 5.200 7.300 4.500L18 17.500l-.4-2C19.300 14.600 20.500 13.300 20.500 11.800 20.500 9 17.900 7 14.500 7z" fill="#ececec" />
          <circle cx="5.300" cy="5.200" r="1" fill="#116227" />
          <circle cx="10" cy="5.200" r="1" fill="#116227" />
          <circle cx="12.500" cy="10.500" r=".8" fill="#666" />
          <circle cx="16.500" cy="10.500" r=".8" fill="#666" />
        </svg>
        <span className="h-[2px] w-full bg-[#ff7a14]" />
      </button>
      <div className="ml-auto flex items-center gap-2 pr-2">
        <button type="button" aria-label="显示隐藏的图标">
          <svg width="11" height="6" viewBox="0 0 11 6" fill="none" stroke="#e8edf0"><path d="M.5 5.500l5-5 5 5" /></svg>
        </button>
        <svg width="14" height="9" viewBox="0 0 14 9" fill="none" aria-hidden="true">
          <path d="M4.500 2.500h8v5h-8z" fill="#fff" stroke="#fff" />
          <path d="M13.500 4v2M0 2h4M1 0v2M3 0v2M2 2v4h2" stroke="#fff" />
        </svg>
        <svg width="20" height="12" viewBox="0 0 20 12" fill="none" stroke="#cdd5dd" aria-hidden="true">
          <path d="M.5.500h19v11H.5z" />
          <path d="M3 3.500h14M3 6h14" strokeDasharray="1.500 1.500" />
          <path d="M5 9h10" />
        </svg>
        <button type="button" className="text-[12px] font-bold">中</button>
        <time className="w-[55px] pt-px text-center text-[11px] leading-4">
          <span className="block">21:49</span>
          <span className="block">2026/4/26</span>
        </time>
        <button type="button" aria-label="通知中心" className="ml-1">
          <svg width="15" height="15" viewBox="0 0 15 15" fill="none" stroke="#e0e5ea"><path d="M.5 1.500h14v10h-4v3l-3-3h-7z" /></svg>
        </button>
      </div>
    </div>
  );
}

/* ---------------- PAGE ---------------- */

export default function App() {
  return (
    <div className="relative min-h-screen overflow-hidden bg-[#f0f0f0] font-['Roboto','Noto_Sans_CJK_SC',sans-serif] text-[#1c1c1c]">
      <header className="flex h-[10px] items-end justify-between overflow-hidden bg-white pr-[2px]">
        <div className="flex items-end gap-1">
          <span className="flex h-[18px] w-[11px] items-end justify-center bg-[#d93434] pb-1 text-[9px] leading-[9px] font-bold text-white">EC</span>
          <h1 className="pb-px text-[11px] leading-[14px] whitespace-nowrap">
            6022403: MegaFusionGroup-Live 1 - Mega Fusion Group Ltd. - [XAUUSD,H4]
          </h1>
        </div>
        <div className="flex items-end gap-[30px] pb-[5px]">
          <button type="button" aria-label="还原">
            <svg width="10" height="10" viewBox="0 0 10 10" fill="none" stroke="#333"><path d="M.5 2.500h7v7h-7zM2.500 2V.5h7v7H8" /></svg>
          </button>
          <button type="button" aria-label="关闭">
            <svg width="10" height="10" viewBox="0 0 10 10" fill="none" stroke="#333"><path d="M0 0l10 10M10 0L0 10" /></svg>
          </button>
        </div>
      </header>

      <div className="flex h-[18px] items-center border-b border-[#b9b9b9]">
        <Ico size={14}>
          <path d="M1 1.500h10v9H1z" fill="#cfe3f7" stroke="#5b8ec5" />
          <path d="M4.500 5.500h11v10h-11z" fill="#fff" stroke="#5b8ec5" />
          <path d="M7 13V9M10 12V7M13 13V9" stroke="#6a9bd0" />
        </Ico>
        <nav className="flex gap-4 pl-[6px] text-[10px] leading-[15px]">
          {MENUS.map(([name, key]) => (
            <button key={key} type="button" className="whitespace-nowrap">
              {name}(<u>{key}</u>)
            </button>
          ))}
        </nav>
        <div className="ml-auto flex gap-[3px] pr-1">
          <button type="button" aria-label="最小化" className="flex h-[14px] w-[14px] items-end justify-center bg-white pb-1">
            <span className="h-px w-1 bg-[#555]" />
          </button>
          <button type="button" aria-label="还原窗口" className="flex h-[14px] w-[14px] items-center justify-center bg-white">
            <svg width="6" height="6" viewBox="0 0 6 6" fill="none" stroke="#666"><path d="M.5 2.500h3v3h-3zM2.500 2V.5h3v3H4" /></svg>
          </button>
        </div>
      </div>

      <MainToolbar />
      <ChartToolbar />

      <div className="flex">
        <LeftDocks />
        <Chart />
      </div>

      <Terminal />
      <StatusBar />
      <Taskbar />

      <div className="pointer-events-none absolute right-[15px] bottom-6 flex items-center gap-1 text-[25px] leading-[34px] text-white [text-shadow:1px_1px_1px_#333]">
        <svg width="27" height="29" viewBox="0 0 27 29" aria-hidden="true">
          <path d="M13.500 1C6 1 1 6 1 12.500 1 19 6 24 12 24.500V28c8-3 13-8.500 13-15.500C25 6 20.500 1 13.500 1z" fill="#fff" />
          <path d="M19 7c-4-2-7 0-7 4v6c0 3-4 3-4 .500s2-3 4-2.500M12 12h5" fill="none" stroke="#28333d" strokeWidth="2.600" />
        </svg>
        @镰刀收割者
      </div>
    </div>
  );
}
